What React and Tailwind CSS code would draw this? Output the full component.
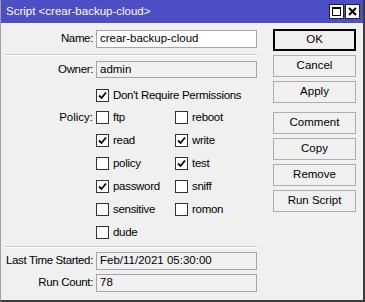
import React from "react";

const font = { fontFamily: '"Liberation Sans", Arial, sans-serif' };

// small check box like the winbox one
function Check({ checked, label }) {
  return (
    <div className="flex items-center h-[13px]">
      <div className="w-[13px] h-[13px] border border-[#333333] bg-white flex items-center justify-center shrink-0">
        {checked && (
          <svg width="9" height="9" viewBox="0 0 9 9">
            <path d="M1 4.5 L3.5 7 L8 1.5" fill="none" stroke="#000" strokeWidth="1.8" />
          </svg>
        )}
      </div>
      <span className="ml-[4px] text-[11.5px] leading-none whitespace-nowrap tracking-[-0.3px]">{label}</span>
    </div>
  );
}

function Row({ label, children, className = "" }) {
  return (
    <div className={"flex items-center " + className}>
      <div className="w-[91px] pr-[3px] flex justify-end shrink-0">
        <span className="text-[11.5px] leading-none whitespace-nowrap shrink-0 tracking-[-0.35px]">{label}</span>
      </div>
      {children}
    </div>
  );
}

function Field({ value, disabled }) {
  return (
    <div
      className={
        "w-[161px] h-full border border-[#a5a5a5] px-[3px] flex items-center text-[11.5px] leading-none whitespace-nowrap " +
        (disabled ? "bg-[#f0f0f0]" : "bg-white")
      }
    >
      {value}
    </div>
  );
}

const Sep = ({ className = "" }) => (
  <div className={"w-[252px] border-t border-[#c9c9c9] border-b border-b-white " + className} />
);

const policies = [
  [["ftp", false], ["reboot", false]],
  [["read", true], ["write", true]],
  [["policy", false], ["test", true]],
  [["password", true], ["sniff", false]],
  [["sensitive", false], ["romon", false]],
  [["dude", false], null],
];

export default function App() {
  return (
    <div
      style={font}
      className="w-[365px] h-[302px] bg-[#f0f0f0] text-black border-l border-[#a0a0a0] border-r-2 border-r-[#3c3c3c] border-b-2 border-b-[#3c3c3c] flex flex-col"
    >
      {/* title bar */}
      <div className="h-[23px] bg-[#4d4dc6] flex items-center pl-[5px] pr-[3px] shrink-0">
        <span className="text-white text-[11.5px] leading-none flex-1">Script &lt;crear-backup-cloud&gt;</span>
        <div className="w-[15px] h-[15px] bg-white border border-[#222] flex items-center justify-center">
          <div className="w-[9px] h-[9px] border border-black border-t-2" />
        </div>
        <div className="w-[15px] h-[15px] bg-white border border-[#222] ml-[1px] flex items-center justify-center">
          <svg width="9" height="9" viewBox="0 0 9 9">
            <path d="M1 1 L8 8 M8 1 L1 8" stroke="#000" strokeWidth="2" />
          </svg>
        </div>
      </div>

      <div className="flex flex-1">
        {/* form */}
        <div className="w-[266px] pl-[4px]">
          <Row label="Name:" className="mt-[7px] h-[18px]">
            <Field value="crear-backup-cloud" />
          </Row>
          <Sep className="mt-[6px]" />
          <Row label="Owner:" className="mt-[5px] h-[17px]">
            <Field value="admin" disabled />
          </Row>
          <div className="mt-[11px] ml-[91px]">
            <Check checked label="Don't Require Permissions" />
          </div>
          <div className="mt-[9px] flex flex-col gap-[10px]">
            {policies.map((row, i) => (
              <div key={i} className="flex items-center h-[13px]">
                <div className="w-[91px] pr-[3px] text-right text-[11.5px] leading-none">
                  {i === 0 ? "Policy:" : ""}
                </div>
                <div className="w-[79px]">
                  <Check checked={row[0][1]} label={row[0][0]} />
                </div>
                {row[1] && <Check checked={row[1][1]} label={row[1][0]} />}
              </div>
            ))}
          </div>
          <Sep className="mt-[7px]" />
          <Row label="Last Time Started:" className="mt-[4px] h-[18px]">
            <Field value="Feb/11/2021 05:30:00" disabled />
          </Row>
          <Row label="Run Count:" className="mt-[4px] h-[18px]">
            <Field value="78" disabled />
          </Row>
        </div>

        {/* buttons */}
        <div className="pl-[6px] pt-[6px] flex flex-col">
          <button className="w-[83px] h-[22px] border-2 border-black bg-[#f0f0f0] text-[11.5px] leading-none">OK</button>
          {["Cancel", "Apply"].map((b) => (
            <button key={b} className="mt-[4px] w-[83px] h-[22px] border border-[#adadad] bg-[#f0f0f0] text-[11.5px] leading-none">
              {b}
            </button>
          ))}
          {["Comment", "Copy", "Remove", "Run Script"].map((b, i) => (
            <button
              key={b}
              className={
                (i === 0 ? "mt-[9px] " : "mt-[4px] ") +
                "w-[83px] h-[22px] border border-[#adadad] bg-[#f0f0f0] text-[11.5px] leading-none"
              }
            >
              {b}
            </button>
          ))}
        </div>
      </div>
    </div>
  );
}
